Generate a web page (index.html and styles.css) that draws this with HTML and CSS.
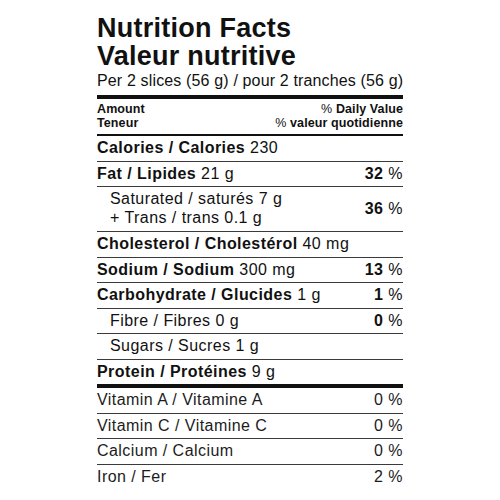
FILE: index.html
```html
<!DOCTYPE html>
<html lang="en">
<head>
    <meta charset="UTF-8">
    <meta name="viewport" content="width=device-width, initial-scale=1.0">
    <title>Nutrition Facts</title>
    <link rel="stylesheet" href="styles.css">
</head>
<body>
    <div class="label">
        <h1 class="title">Nutrition Facts<br>Valeur nutritive</h1>
        <p class="serving">Per 2 slices (56 g) / pour 2 tranches (56 g)</p>
        <div class="head">
            <div>Amount<br>Teneur</div>
            <div class="head-right"><span class="light">%</span> Daily Value<br><span class="light">%</span> valeur quotidienne</div>
        </div>

        <div class="row first">
            <span><b>Calories / Calories</b> 230</span>
        </div>
        <div class="row">
            <span><b>Fat / Lipides</b> 21 g</span>
            <span class="pct"><b>32</b> %</span>
        </div>
        <div class="row double sub">
            <span>Saturated / saturés 7 g<br>+ Trans / trans 0.1 g</span>
            <span class="pct"><b>36</b> %</span>
        </div>
        <div class="row">
            <span><b>Cholesterol / Cholestérol</b> 40 mg</span>
        </div>
        <div class="row">
            <span><b>Sodium / Sodium</b> 300 mg</span>
            <span class="pct"><b>13</b> %</span>
        </div>
        <div class="row">
            <span><b>Carbohydrate / Glucides</b> 1 g</span>
            <span class="pct"><b>1</b> %</span>
        </div>
        <div class="row sub">
            <span>Fibre / Fibres 0 g</span>
            <span class="pct"><b>0</b> %</span>
        </div>
        <div class="row sub">
            <span>Sugars / Sucres 1 g</span>
        </div>
        <div class="row thick">
            <span><b>Protein / Protéines</b> 9 g</span>
        </div>

        <div class="row vit first">
            <span>Vitamin A / Vitamine A</span>
            <span class="pct">0 %</span>
        </div>
        <div class="row vit">
            <span>Vitamin C / Vitamine C</span>
            <span class="pct">0 %</span>
        </div>
        <div class="row vit">
            <span>Calcium / Calcium</span>
            <span class="pct">0 %</span>
        </div>
        <div class="row vit">
            <span>Iron / Fer</span>
            <span class="pct">2 %</span>
        </div>
    </div>
</body>
</html>
```

FILE: styles.css
```css
*{
    margin: 0;
    padding: 0;
}
html,body{
    background-color: #fff;
}
body{
    font-family: "Liberation Sans", Arial, sans-serif;
    color: #111;
}
.label{
    margin-left: 97px;
    width: 306px;
    padding-top: 14px;
}
.title{
    font-size: 27px;
    line-height: 28px;
    font-weight: bold;
    letter-spacing: 0.25px;
}
.serving{
    font-size: 16px;
    line-height: 22px;
    letter-spacing: 0.15px;
    white-space: nowrap;
    padding-bottom: 3px;
    border-bottom: 4px solid #111;
}
.head{
    display: flex;
    justify-content: space-between;
    font-size: 12.5px;
    line-height: 14px;
    font-weight: bold;
    letter-spacing: 0.1px;
    padding-top: 3px;
    padding-bottom: 4px;
    border-bottom: 2px solid #111;
}
.head-right{
    text-align: right;
}
.light{
    font-weight: normal;
}
.row{
    display: flex;
    justify-content: space-between;
    align-items: center;
    font-size: 16px;
    line-height: 24.5px;
    letter-spacing: 0.45px;
    border-top: 1px solid #3a3a3a;
}
.row.first{
    border-top: none;
}
.label > .row:first-of-type{
    line-height: 23px;
}
.sub{
    padding-left: 13px;
}
.double{
    line-height: 19px;
    padding-top: 2px;
    padding-bottom: 4px;
}
.thick{
    border-bottom: 4px solid #111;
}
.vit{
    color: #1c1c1c;
}
.pct{
    text-align: right;
}
```
